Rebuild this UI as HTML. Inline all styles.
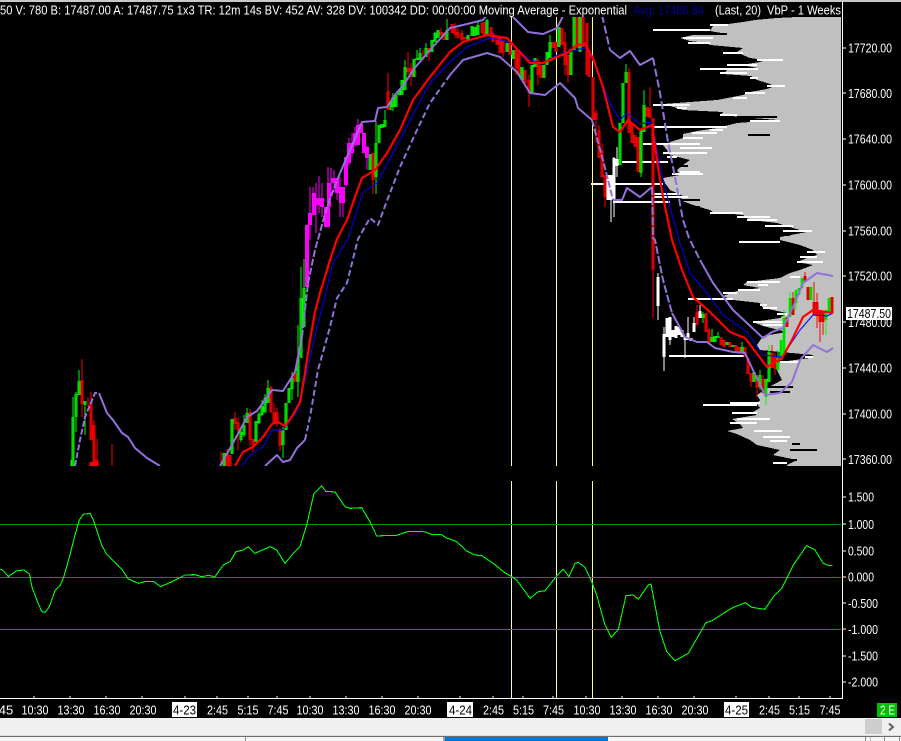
<!DOCTYPE html>
<html><head><meta charset="utf-8"><style>
html,body{margin:0;padding:0;background:#000;width:901px;height:741px;overflow:hidden}
svg{display:block;position:absolute;left:0;top:0}
text{font-family:"Liberation Sans",sans-serif;font-size:13px;fill:#fff}
</style></head><body>
<svg width="901" height="741" viewBox="0 0 901 741" xmlns="http://www.w3.org/2000/svg">
<rect width="901" height="741" fill="#000"/>
<rect width="901" height="2" fill="#c8c8c8"/>

<polygon fill="#c0c0c0" shape-rendering="crispEdges" points="841,17 797,17 777,18 755,20 743,22 728,24 713,26 710,31 727,34 693,35 680,38 690,41 707,43 710,45 743,48 737,52 743,55 750,58 765,60 760,62 741,65 758,68 727,70 723,74 751,76 757,80 767,83 775,86 767,89 750,92 743,95 717,100 663,104 677,108 683,110 723,112 720,115 753,118 778,120 737,123 717,128 697,131 683,134 683,138 673,141 663,145 667,150 670,155 690,160 683,165 677,170 680,175 663,178 665,183 670,190 683,196 680,200 693,205 710,210 713,212 743,215 750,220 777,223 793,228 807,232 780,237 780,240 800,245 813,250 817,255 807,258 797,262 813,265 800,270 790,273 780,278 747,282 743,285 760,288 737,291 723,296 733,300 760,303 763,308 787,313 780,318 753,322 763,326 787,332 763,336 757,345 760,350 813,355 810,358 780,362 777,370 782,380 767,388 757,395 760,400 757,404 760,408 753,412 757,415 732,419 740,424 743,428 727,431 737,434 750,440 757,445 780,450 773,455 797,460 787,465 787,466 841,466"/>

<g stroke="#fff" stroke-width="2" fill="none" shape-rendering="crispEdges">
<path d="M653 30H710M710 25H728M683 38H713M688 43H710M723 53H743M757 60H783M727 65H757M700 69H758M720 73H747M750 78H758M767 86H785M745 93H765M733 98H747M653 105H690M677 108H687M720 115H737M750 121H780M653 127H727M710 130H723M692 133H717M683 138H703M643 144H700M680 148H712M663 153H707M667 157H677M622 162H668M680 172H700M672 174H703M591 184H663M653 194H680M653 197H688M613 202H670M710 213H743M737 217H770M747 220H777M765 226H793M783 231H812M739 242H780M807 252H825M800 257H817M797 262H823M790 277H800M747 282H780M758 285H768M738 290H760M723 293H737M688 299H733M760 305H767M763 308H777M777 314H787M753 322H785M763 325H783M669 356H747M803 357H813M780 362H800M730 403H760M703 405H757M732 413H757M737 419H770M730 423H757M754 431H782M763 437H790M770 441H787M773 463H787"/>
</g>
<g stroke="#000" stroke-width="2" fill="none" shape-rendering="crispEdges">
<path d="M690 34H727M737 117H777M668 166H688M660 200H700M660 207H700M770 235H790M747 357H805M767 387H793M770 392H790M792 444H800M790 450H817M775 460H797M745 374H775M748 135H770"/>
</g>

<g stroke="#ffff99" stroke-width="1" shape-rendering="crispEdges">
<path d="M511.5 17V466M556.5 17V466M592.5 17V466M511.5 481V698M556.5 481V698M592.5 481V698"/>
</g>

<g stroke="#008f00" stroke-width="1" shape-rendering="crispEdges">
<path d="M0 524.5H841M0 577.5H841M0 629.5H841"/>
</g>

<defs>
<path id="gb" d="M73 417V466M76 394V417M79 381V395M85 401V405M224 453V466M232 419V454M241 432V440M244 425V435M247 413V423M256 421V442M259 414V423M262 406V415M265 398V412M268 388V403M283 430V445M286 403V430M289 388V403M292 378V389M298 358V382M301 298V358M304 288V327M370 154V170M376 143V177M379 125V143M382 124V128M385 120V127M390 102V110M393 97V107M396 95V107M399 90V95M402 80V95M405 67V90M414 59V77M417 58V60M420 53V60M426 48V57M432 40V52M435 33V42M438 30V38M447 30V40M468 35V40M472 26V36M475 27V36M478 25V35M487 20V35M507 43V52M513 50V59M522 67V80M532 65V94M535 58V67M544 65V78M547 52V65M550 42V58M559 27V47M571 50V75M574 17V50M580 17V52M620 123V165M623 83V123M626 72V83M641 130V173M644 105V132M703 314V318M712 337V342M715 336V342M718 336V338M727 342V345M733 345V347M742 347V352M754 372V382M760 375V387M766 379V397M769 352V382M778 358V370M781 340V360M784 318V355M790 298V317M796 290V303M799 288V295M802 278V288M811 287V300M826 310V320M829 298V312"/>
<path id="rb" d="M82 380V404M91 402V440M94 425V462M97 460V466M227 453V466M230 455V466M235 418V424M238 422V430M250 412V440M253 439V445M271 387V412M274 412V423M277 412V423M280 430V446M295 373V382M373 153V180M388 91V110M408 68V72M411 68V77M423 57V59M429 48V53M441 32V36M444 33V40M452 24V33M455 28V35M458 32V38M462 33V40M465 37V39M482 23V33M484 22V35M491 27V35M493 33V42M497 38V45M500 38V53M503 40V53M510 43V55M516 50V68M519 53V75M525 70V83M529 80V93M538 60V75M541 65V78M553 42V48M556 42V52M562 28V45M565 42V65M568 55V75M577 17V48M583 17V47M587 23V75M589 50V77M593 77V120M596 113V120M599 130V158M602 150V177M605 175V197M629 72V133M632 123V143M635 135V147M638 137V172M647 107V117M650 108V118M653 118V270M697 312V325M706 313V332M709 330V343M721 337V345M724 340V347M730 342V347M736 345V352M739 347V352M745 347V357M748 358V374M751 373V382M757 375V388M763 379V393M772 353V368M775 357V369M787 317V327M793 298V315M805 276V282M808 287V300M814 302V315M817 302V315M820 311V322M823 312V322M832 297V313"/>
</defs>

<path stroke="#0f0" stroke-width="1" fill="none" shape-rendering="crispEdges" d="M71 460V466M73 397V417M76 392V432M79 370V381M85 401V435M241 428V442M244 415V437M247 408V423M259 412V424M262 400V416M265 394V413M268 380V403M283 427V458M292 372V400M298 325V397M301 267V358M304 259V327M376 121V194M385 110V127M393 93V111M405 60V67M417 50V60M420 48V60M426 43V57M435 32V42M447 19V40M478 22V35M487 19V35M550 35V58M644 90V132M626 64V83M641 130V177M703 312V323M712 329V342M718 332V338M766 379V405M769 345V382M778 350V370M784 310V355M790 292V317M796 290V310M826 310V335M742 342V352M760 370V390"/>
<path stroke="#f00" stroke-width="1" fill="none" shape-rendering="crispEdges" d="M82 359V417M88 397V407M91 392V402M94 420V425M97 439V466M112 444V466M221 452V466M227 449V466M235 412V430M238 417V450M250 409V446M253 439V452M271 386V413M274 403V424M277 408V427M280 428V451M373 153V194M388 73V110M408 52V75M411 63V86M423 50V60M429 48V61M441 28V36M455 23V38M458 28V38M462 30V42M503 40V57M516 47V75M525 70V87M529 75V107M538 58V85M565 32V75M568 55V83M596 110V143M599 125V158M602 143V177M605 175V207M629 68V133M650 87V118M653 118V318M697 305V325M709 328V343M757 375V397M763 375V393M772 345V368M775 353V375M793 292V315M805 272V282M814 282V315M817 293V328M820 311V342M823 312V335M751 373V387"/>
<path stroke="#f0f" stroke-width="1" fill="none" shape-rendering="crispEdges" d="M310 187V240M313 187V215M316 183V233M319 176V213M322 183V217M328 167V207M331 168V193M334 170V192M337 178V200M340 177V217M343 187V217M346 157V187M349 138V165M352 133V157M355 127V147M358 119V145M367 146V170"/>
<path stroke="#fff" stroke-width="1" fill="none" shape-rendering="crispEdges" d="M611 175V222M614 157V217M617 147V177M658 273V320M664 327V371M670 317V345M685 337V358M688 317V340M694 317V332M700 305V318"/>

<g stroke="#0f0" stroke-width="3" fill="none" shape-rendering="crispEdges"><use href="#gb"/></g>
<g stroke="#f00" stroke-width="3" fill="none" shape-rendering="crispEdges"><use href="#rb"/></g>
<g stroke="#000" stroke-width="1" stroke-opacity=".3" fill="none" shape-rendering="crispEdges"><use href="#gb"/><use href="#rb"/></g>

<path stroke="#f00" stroke-width="3" fill="none" shape-rendering="crispEdges" d="M91 462V466M94 462V466M97 462V466"/>
<path stroke="#f0f" stroke-width="4" fill="none" shape-rendering="crispEdges" d="M307 225V287M310 213V225M314 193V215M317 198V205M320 198V205M322 198V207M329 183V207M333 178V183M335 178V183M337 178V193M341 187V203M343 187V203M346 157V185M349 143V163M352 143V153M355 133V145M358 125V145M361 124V133M364 133V153M367 147V158"/>
<path stroke="#f0f" stroke-width="6" fill="none" shape-rendering="crispEdges" d="M327 207V227"/>
<path stroke="#fff" stroke-width="3" fill="none" shape-rendering="crispEdges" d="M608 175V200M611 175V200M614 158V200M617 159V166M658 277V306M664 334V357M667 318V337M670 317V340M673 330V337M676 326V338M679 327V335M682 330V337M685 337V340M688 333V340M691 338V341M694 323V332M700 311V318"/>

<clipPath id="top"><rect x="0" y="17" width="841" height="449"/></clipPath>
<g clip-path="url(#top)" fill="none" stroke-linejoin="round">
<polyline stroke="#0000ff" stroke-width="1" points="242,466 250,455 263,447 272,430 283,430 298,410 308,367 317,327 325,297 333,263 348,239 363,192 377,183 400,140 417,107 430,83 450,62 467,47 490,38 510,42 530,60 543,63 557,55 577,50 587,47 597,70 610,103 620,120 627,113 640,124 652,122 660,167 670,207 679,240 690,273 707,293 723,315 747,332 763,355 782,357 800,330 813,315 827,316 833,313"/>
<polyline stroke="#9370db" stroke-width="2" points="99,393 107,413 113,420 122,433 128,437 135,448 147,458 160,466"/>
<polyline stroke="#9370db" stroke-width="2" stroke-dasharray="6 2" points="75,466 80,440 85,417 95,393 99,393"/>
<polyline stroke="#9370db" stroke-width="2" points="220,466 233,443 247,417 257,411 272,390 283,391 295,372 302,337"/>
<polyline stroke="#9370db" stroke-width="2" stroke-dasharray="7 2" points="302,337 308,283 315,250 327,207 340,173"/>
<polyline stroke="#9370db" stroke-width="2" points="340,173 353,143 362,122 375,121 378,108 387,107 395,95 405,83 413,70 430,50 450,28 463,25 483,20 487,15"/>
<polyline stroke="#9370db" stroke-width="2" points="513,17 528,32 543,34 557,28 563,16"/>
<polyline stroke="#9370db" stroke-width="2" stroke-dasharray="8 3" points="602,15 610,50"/>
<polyline stroke="#9370db" stroke-width="2" points="610,50 620,58 630,51 640,65 653,58"/>
<polyline stroke="#9370db" stroke-width="2" stroke-dasharray="8 3" points="653,58 660,93 668,142 675,177 683,220 689,238 700,260"/>
<polyline stroke="#9370db" stroke-width="2" points="700,260 713,283 733,310 747,323 763,338 772,332 783,328 793,307 803,283 817,273 833,276"/>
<polyline stroke="#9370db" stroke-width="2" points="265,466 277,455 283,462 290,460 297,448 305,440"/>
<polyline stroke="#9370db" stroke-width="2" stroke-dasharray="6 3" points="305,440 310,417 318,370 330,327 337,298 347,283 358,239 370,218 378,225 388,198 400,167 417,130 430,103 450,75"/>
<polyline stroke="#9370db" stroke-width="2" points="450,75 463,60 487,53 500,57 517,72 530,93 545,95 560,83 575,98 578,108 592,120"/>
<polyline stroke="#9370db" stroke-width="2" stroke-dasharray="7 2" points="592,120 603,160 613,200"/>
<polyline stroke="#9370db" stroke-width="2" points="613,200 622,200 627,188 640,197 652,187"/>
<polyline stroke="#9370db" stroke-width="2" stroke-dasharray="8 2" points="652,187 653,238 655,240 663,280 672,313"/>
<polyline stroke="#9370db" stroke-width="2" points="672,313 685,337 697,342 707,342 715,348 733,352 745,353 753,370 765,395 780,393 792,382 800,360 813,345 827,352 833,348"/>
<polyline stroke="#ff0000" stroke-width="2.2" points="235,466 243,452 253,447 263,437 272,424 278,422 285,426 293,415 300,402 305,373 310,340 315,312 320,293 324,280 330,260 337,239 347,220 355,197 362,178 375,170 387,153 400,130 413,100 430,77 450,52 463,42 487,35 507,38 518,50 530,63 543,63 557,57 567,53 577,45 585,44 593,58 603,87 613,127 620,132 628,120 640,130 652,125 658,167 663,197 672,240 682,270 693,297 710,312 730,332 745,338 767,367 782,358 792,340 803,317 813,310 833,313"/>
</g>

<g transform="translate(0,470) scale(.33333)" fill="none" stroke="#00ff00" stroke-width="3.3" shape-rendering="crispEdges">
<polyline points="0,298 8,300 25,320 50,302 72,300 88,312 97,355 110,388 125,425 135,427 148,410 165,362 180,347 190,325 210,255 225,195 238,150 250,133 270,130 280,150 305,225 320,253 365,297 385,327 415,340 440,334 462,335 482,350 520,333 555,315 585,314 605,320 625,316 645,320 670,285 690,275 708,245 730,240 745,230 765,250 810,230 830,240 855,280 880,250 900,230 920,165 942,70 965,48 978,64 1005,66 1035,110 1050,115 1085,113 1110,155 1130,198 1170,196 1190,196 1225,184 1270,184 1295,193 1325,194 1340,205 1350,207"/>
</g>
<g transform="translate(450,470) scale(.33333)" fill="none" stroke="#00ff00" stroke-width="3.3" shape-rendering="crispEdges">
<polyline points="0,207 20,215 50,243 75,255 95,257 130,280 160,305 185,320 200,330 240,385 265,365 285,362 320,318 340,298 357,320 375,280 385,277 405,292 425,335 440,375 465,465 484,502 505,478 528,377 550,375 565,388 595,345 603,342 630,485 650,545 675,572 715,550 735,515 768,458 785,453 820,430 850,412 887,398 905,412 945,418 970,380 995,355 1030,285 1070,227 1095,240 1120,280 1135,286 1148,287"/>
</g>

<g stroke="#fff" stroke-width="1" fill="none" shape-rendering="crispEdges">
<path d="M842.5 2V698.5H0"/>
<path d="M843 48H846M843 93H846M843 139H846M843 185H846M843 231H846M843 276H846M843 322H846M843 368H846M843 414H846M843 459H846M843 497H846M843 524H846M843 551H846M843 577H846M843 603H846M843 629H846M843 656H846M843 682H846"/>
<path d="M34 696V698M70 696V698M106 696V698M142 696V698M185 696V698M217 696V698M248 696V698M277 696V698M310 696V698M346 696V698M382 696V698M418 696V698M460 696V698M493 696V698M523 696V698M553 696V698M586 696V698M622 696V698M658 696V698M694 696V698M736 696V698M769 696V698M799 696V698M830 696V698"/>
</g>

<rect x="0" y="2" width="842" height="15" fill="#000"/>
<text x="0" y="14.5" textLength="627" lengthAdjust="spacingAndGlyphs">50 V: 780 B: 17487.00 A: 17487.75 1x3 TR: 12m 14s BV: 452 AV: 328 DV: 100342 DD: 00:00:00 Moving Average - Exponential</text>
<text x="633" y="14.5" textLength="71" lengthAdjust="spacingAndGlyphs" style="fill:#000099">Avg: 17486.84</text>
<text x="715" y="14.5" textLength="46" lengthAdjust="spacingAndGlyphs">(Last, 20)</text>
<text x="767" y="14.5" textLength="74" lengthAdjust="spacingAndGlyphs">VbP - 1 Weeks</text>

<g>
<text x="848" y="52.5" textLength="44" lengthAdjust="spacingAndGlyphs">17720.00</text>
<text x="848" y="98" textLength="44" lengthAdjust="spacingAndGlyphs">17680.00</text>
<text x="848" y="143.5" textLength="44" lengthAdjust="spacingAndGlyphs">17640.00</text>
<text x="848" y="189.5" textLength="44" lengthAdjust="spacingAndGlyphs">17600.00</text>
<text x="848" y="235.5" textLength="44" lengthAdjust="spacingAndGlyphs">17560.00</text>
<text x="848" y="280.5" textLength="44" lengthAdjust="spacingAndGlyphs">17520.00</text>
<text x="848" y="327" textLength="44" lengthAdjust="spacingAndGlyphs">17480.00</text>
<text x="848" y="372.5" textLength="44" lengthAdjust="spacingAndGlyphs">17440.00</text>
<text x="848" y="418.5" textLength="44" lengthAdjust="spacingAndGlyphs">17400.00</text>
<text x="848" y="464" textLength="44" lengthAdjust="spacingAndGlyphs">17360.00</text>
</g>
<rect x="846" y="307" width="46" height="13" fill="#fff"/>
<text x="847" y="318" textLength="44" lengthAdjust="spacingAndGlyphs" style="fill:#000">17487.50</text>

<g>
<text x="848" y="501.5" textLength="26" lengthAdjust="spacingAndGlyphs">1.500</text>
<text x="848" y="529" textLength="26" lengthAdjust="spacingAndGlyphs">1.000</text>
<text x="848" y="555.5" textLength="26" lengthAdjust="spacingAndGlyphs">0.500</text>
<text x="848" y="581.5" textLength="26" lengthAdjust="spacingAndGlyphs">0.000</text>
<text x="848" y="608" textLength="30" lengthAdjust="spacingAndGlyphs">-0.500</text>
<text x="848" y="634" textLength="30" lengthAdjust="spacingAndGlyphs">-1.000</text>
<text x="848" y="660.5" textLength="30" lengthAdjust="spacingAndGlyphs">-1.500</text>
<text x="848" y="686.5" textLength="30" lengthAdjust="spacingAndGlyphs">-2.000</text>
</g>

<g text-anchor="middle">
<text x="6" y="714.5">45</text>
<text x="35" y="714.5" textLength="27" lengthAdjust="spacingAndGlyphs">10:30</text>
<text x="71" y="714.5" textLength="27" lengthAdjust="spacingAndGlyphs">13:30</text>
<text x="107" y="714.5" textLength="27" lengthAdjust="spacingAndGlyphs">16:30</text>
<text x="143" y="714.5" textLength="27" lengthAdjust="spacingAndGlyphs">20:30</text>
<text x="217.5" y="714.5" textLength="21" lengthAdjust="spacingAndGlyphs">2:45</text>
<text x="248" y="714.5" textLength="21" lengthAdjust="spacingAndGlyphs">5:15</text>
<text x="278" y="714.5" textLength="21" lengthAdjust="spacingAndGlyphs">7:45</text>
<text x="310" y="714.5" textLength="27" lengthAdjust="spacingAndGlyphs">10:30</text>
<text x="346" y="714.5" textLength="27" lengthAdjust="spacingAndGlyphs">13:30</text>
<text x="382" y="714.5" textLength="27" lengthAdjust="spacingAndGlyphs">16:30</text>
<text x="418" y="714.5" textLength="27" lengthAdjust="spacingAndGlyphs">20:30</text>
<text x="493.5" y="714.5" textLength="21" lengthAdjust="spacingAndGlyphs">2:45</text>
<text x="523.5" y="714.5" textLength="21" lengthAdjust="spacingAndGlyphs">5:15</text>
<text x="553.5" y="714.5" textLength="21" lengthAdjust="spacingAndGlyphs">7:45</text>
<text x="587" y="714.5" textLength="27" lengthAdjust="spacingAndGlyphs">10:30</text>
<text x="623" y="714.5" textLength="27" lengthAdjust="spacingAndGlyphs">13:30</text>
<text x="659" y="714.5" textLength="27" lengthAdjust="spacingAndGlyphs">16:30</text>
<text x="695" y="714.5" textLength="27" lengthAdjust="spacingAndGlyphs">20:30</text>
<text x="769.5" y="714.5" textLength="21" lengthAdjust="spacingAndGlyphs">2:45</text>
<text x="799.5" y="714.5" textLength="21" lengthAdjust="spacingAndGlyphs">5:15</text>
<text x="830" y="714.5" textLength="21" lengthAdjust="spacingAndGlyphs">7:45</text>
</g>
<rect x="172" y="702" width="25" height="15" fill="#fff"/>
<text x="173" y="714.5" textLength="23" lengthAdjust="spacingAndGlyphs" style="fill:#000">4-23</text>
<rect x="447" y="702" width="26" height="15" fill="#fff"/>
<text x="449" y="714.5" textLength="23" lengthAdjust="spacingAndGlyphs" style="fill:#000">4-24</text>
<rect x="724" y="702" width="25" height="15" fill="#fff"/>
<text x="725" y="714.5" textLength="23" lengthAdjust="spacingAndGlyphs" style="fill:#000">4-25</text>
<rect x="877" y="703" width="20" height="14" fill="#00c000"/>
<text x="880" y="714.5" textLength="15" lengthAdjust="spacingAndGlyphs">2 E</text>

<rect x="0" y="718" width="901" height="17" fill="#f0f0f0"/>
<rect x="865" y="719" width="17" height="15" fill="#cdcdcd"/>
<path d="M889 723.5L893 727L889 730.5" fill="none" stroke="#606060" stroke-width="2"/>
<rect x="0" y="735" width="901" height="1.5" fill="#dcdcdc"/>
<rect x="0" y="737" width="901" height="4" fill="#f5f5f5"/>
<rect x="445" y="737" width="163" height="4" fill="#0078d7"/>
<rect x="608" y="737" width="2" height="4" fill="#fff"/>
<rect x="245" y="737" width="1" height="4" fill="#8a8a8a"/>
<rect x="443" y="737" width="2" height="4" fill="#a0a0a0"/>
<rect x="865" y="737" width="1" height="4" fill="#8a8a8a"/>
<rect x="870" y="737" width="1" height="4" fill="#c0c0c0"/>
<rect x="884" y="737" width="1" height="4" fill="#8a8a8a"/>
<rect x="899" y="737" width="1" height="4" fill="#8a8a8a"/>
</svg>
</body></html>
